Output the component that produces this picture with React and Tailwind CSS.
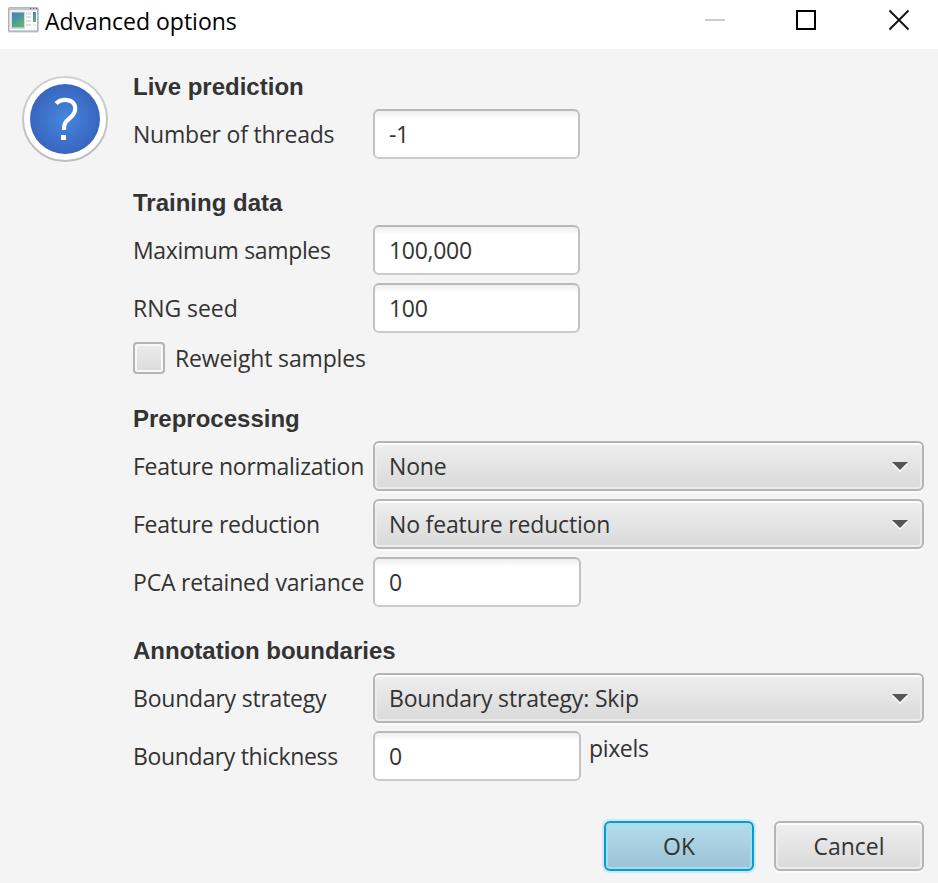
import { useState } from "react";

const App = () => {
    const [form, setForm] = useState({
        threads: "-1",
        maxSamples: "100,000",
        seed: "100",
        variance: "0",
        thickness: "0",
    });

    const bind = (key) => ({
        value: form[key],
        onChange: (e) => setForm({ ...form, [key]: e.target.value }),
    });

    return (
        <div className="w-[938px] h-[883px] overflow-hidden bg-[#f4f4f4] text-[#333333] font-['Open_Sans',sans-serif] text-[23px] leading-8 whitespace-nowrap">
            <TitleBar />

            <div className="flex pl-[22px] pr-[14px] pt-[22px]">
                <QuestionIcon />

                <main className="ml-[25px] w-[791px]">
                    <Heading first>Live prediction</Heading>
                    <Row label="Number of threads" className="tracking-[-0.22px]">
                        <TextField {...bind("threads")} />
                    </Row>

                    <Heading>Training data</Heading>
                    <div className="flex flex-col gap-2">
                        <Row label="Maximum samples" className="tracking-[-0.35px]">
                            <TextField {...bind("maxSamples")} />
                        </Row>
                        <Row label="RNG seed" className="tracking-[-0.05px]">
                            <TextField {...bind("seed")} />
                        </Row>
                    </div>
                    <label className="mt-[9px] mb-[29px] flex h-8 items-center">
                        <span className="h-8 w-8 rounded-[4px] border-2 border-[#b5b5b5] bg-linear-to-b from-[#ececec] to-[#dbdbdb] shadow-[inset_0_0_0_2px_#f8f8f8]" />
                        <span className="ml-[10px] tracking-[-0.15px]">Reweight samples</span>
                    </label>

                    <Heading first>Preprocessing</Heading>
                    <div className="flex flex-col gap-2">
                        <Row label="Feature normalization" className="tracking-[-0.27px]">
                            <ComboBox value="None" />
                        </Row>
                        <Row label="Feature reduction" className="tracking-[-0.28px]">
                            <ComboBox value="No feature reduction" />
                        </Row>
                        <Row label="PCA retained variance" className="tracking-[-0.2px]">
                            <TextField wide {...bind("variance")} />
                        </Row>
                    </div>

                    <Heading>Annotation boundaries</Heading>
                    <div className="flex flex-col gap-2">
                        <Row label="Boundary strategy" className="tracking-[-0.22px]">
                            <ComboBox value="Boundary strategy: Skip" />
                        </Row>
                        <Row label="Boundary thickness" className="tracking-[-0.33px]">
                            <TextField wide {...bind("thickness")} />
                            <span className="ml-[8px] mt-[1px] self-start tracking-[-0.35px]">pixels</span>
                        </Row>
                    </div>
                </main>
            </div>

            <footer className="mt-10 flex justify-end gap-5 pr-[14px]">
                <button className="h-[50px] w-[150px] rounded-[6px] border-2 border-[#039ed3] bg-linear-to-b from-[#b4dcec] to-[#9bc3d6] shadow-[0_0_0_2px_#cfe7ef,inset_0_0_0_2px_#a9dbeb]">
                    OK
                </button>
                <button className="h-[50px] w-[150px] rounded-[6px] border-2 border-[#b5b5b5] bg-linear-to-b from-[#efefef] to-[#d9d9d9] shadow-[0_2px_0_#fafafa,inset_0_2px_0_#fdfdfd,inset_0_0_0_2px_#ececec]">
                    Cancel
                </button>
            </footer>
        </div>
    );
};

export default App;

const TitleBar = () => (
    <header className="flex h-[49px] bg-white text-black">
        <WindowIcon />
        <h1 className="ml-[6px] mt-[5px] w-[200px]">Advanced options</h1>
        <svg className="ml-auto h-[49px] w-[258px]" viewBox="0 0 258 49" fill="none">
            <path d="M25 20H45" stroke="#cccccc" strokeWidth="2" />
            <rect x="117" y="11" width="18" height="18" stroke="#000" strokeWidth="2" />
            <path d="M209.500 10.500L228.500 29.500M228.500 10.500L209.500 29.500" stroke="#111" strokeWidth="1.900" />
        </svg>
    </header>
);

const WindowIcon = () => (
    <svg className="ml-[8px] mt-[7px] h-[26px] w-[31px]" viewBox="0 0 31 26">
        <defs>
            <linearGradient id="pane" x1="0" y1="0" x2="0.500" y2="1">
                <stop offset="0" stopColor="#477db2" />
                <stop offset="0.500" stopColor="#4a96a0" />
                <stop offset="1" stopColor="#60b276" />
            </linearGradient>
        </defs>
        <rect x="0" y="0" width="31" height="26" rx="1.500" fill="#e3e3e5" />
        <rect x="0.800" y="0.800" width="29" height="23.400" rx="1" fill="#fcfcfc" stroke="#a0a8b2" strokeWidth="1.300" />
        <rect x="1" y="1" width="28.500" height="2.200" fill="#bcc5cf" />
        <path d="M22 1.500h1.200M25 1.500h1.200M28 1.500h1.200" stroke="#566579" strokeWidth="1.200" />
        <rect x="3" y="5" width="13.500" height="16.500" fill="#e8edf0" stroke="#c7cdd3" strokeWidth="0.700" />
        <rect x="4" y="5.500" width="12" height="15" fill="url(#pane)" />
        <path d="M18 5.500h5v2h-5zM18 9h5v2h-5zM18 13h5v2h-5zM18 17h5v2h-5z" fill="#dedede" />
        <rect x="25" y="5" width="3" height="10" fill="url(#pane)" />
        <rect x="25" y="17" width="3" height="2" fill="#e9e9e9" />
    </svg>
);

const QuestionIcon = () => (
    <svg className="mt-[5px] h-[86px] w-[86px] shrink-0" viewBox="0 0 86 86">
        <defs>
            <radialGradient id="ball">
                <stop offset="0" stopColor="#4787dc" />
                <stop offset="1" stopColor="#3865bf" />
            </radialGradient>
            <linearGradient id="ring" x1="0" y1="0" x2="0" y2="1">
                <stop offset="0" stopColor="#d0d0d0" />
                <stop offset="1" stopColor="#bdbdbd" />
            </linearGradient>
        </defs>
        <circle cx="43" cy="43" r="42" fill="#fff" stroke="url(#ring)" strokeWidth="2" />
        <circle cx="43" cy="43" r="35" fill="url(#ball)" />
        <path d="M34 27.500C36.500 25 39.500 23.800 43 23.800C49 23.800 53.200 27.200 53.200 32.500C53.200 37 50.500 40 47 42.800C43 46 42 48 42 54" fill="none" stroke="#fff" strokeWidth="4.200" />
        <rect x="39" y="59" width="5" height="5" fill="#fff" />
    </svg>
);

const Heading = ({ children, first }) => (
    <h2 className={`mb-[6px] h-8 font-['Liberation_Sans',sans-serif] text-[24px] font-bold ${first ? "" : "mt-7"}`}>
        {children}
    </h2>
);

const Row = ({ label, className, children }) => (
    <div className="flex h-[50px] items-center">
        <span className={`w-[240px] shrink-0 ${className}`}>{label}</span>
        {children}
    </div>
);

const TextField = ({ wide, ...props }) => (
    <input
        type="text"
        {...props}
        className={`h-[50px] rounded-[6px] border-2 border-[#cbcbcb] border-t-[#b8b8b8] border-x-[#c2c2c2] bg-white bg-linear-to-b from-[#eeeeee] to-white to-[8px] pl-[14px] tracking-[-0.3px] outline-none ${wide ? "w-[208px]" : "w-[207px]"}`}
    />
);

const ComboBox = ({ value }) => (
    <button className="flex h-[50px] w-[551px] items-center justify-between rounded-[6px] border-2 border-[#b5b5b5] bg-linear-to-b from-[#efefef] to-[#d9d9d9] pl-[14px] pr-[14px] shadow-[0_2px_0_#fafafa,inset_0_2px_0_#fdfdfd,inset_0_0_0_2px_#ececec]">
        <span className="tracking-[-0.17px]">{value}</span>
        <svg className="mt-[2px] h-[10px] w-4" viewBox="0 0 16 10">
            <path d="M0 2H16L8 10Z" fill="#fff" />
            <path d="M0 0H16L8 8Z" fill="#555" />
        </svg>
    </button>
);
